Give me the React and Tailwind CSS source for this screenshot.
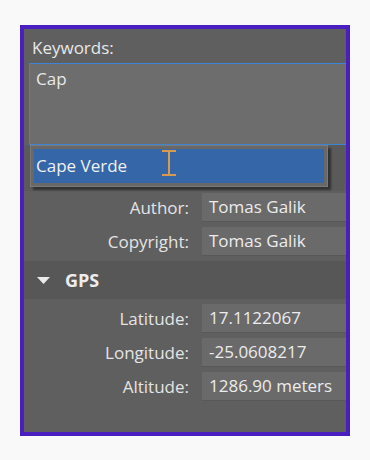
const FieldRow = ({ label, value }) => (
  <div className="flex items-center h-[29px] mb-[5px]">
    <div className="w-[165px] text-right text-[#e4e4e4]">{label}</div>
    <div className="ml-[13px] flex-1 h-full flex items-center pl-[7px] bg-[#6a6a6a] border-b border-[#585858] text-[#ececec]">
      {value}
    </div>
  </div>
);

const App = () => {
  return (
    <div className="min-h-screen bg-[#f9f9f9] pt-[25px] pl-[20px]">
      <div className="relative w-[330px] h-[411px] border-4 border-[#4a1fc0] bg-[#5f5f5f] overflow-hidden font-['Open_Sans',sans-serif] text-[17px] leading-[22px] text-[#e8e8e8]">
        <div className="pl-[8px] pt-[8px]">Keywords:</div>
        <div className="ml-[5px] -mr-[2px] mt-[4px] h-[82px] border border-[#3e84d4] bg-[#6d6d6d] px-[6px] pt-[4px]">
          Cap
        </div>
        <div className="h-[46px] bg-[#5a5a5a]"></div>
        <div className="mt-[2px]">
          <FieldRow label="Author:" value="Tomas Galik" />
          <FieldRow label="Copyright:" value="Tomas Galik" />
        </div>
        <div className="mt-[1px] h-[38px] bg-[#575757] flex items-center">
          <svg width="13" height="7" viewBox="0 0 13 7" className="ml-[13px]">
            <polygon points="0,0 13,0 6.5,7" fill="#ececec" />
          </svg>
          <span className="ml-[15px] font-bold text-[18px] text-[#ededed]">GPS</span>
        </div>
        <div className="mt-[5px]">
          <FieldRow label="Latitude:" value="17.1122067" />
          <FieldRow label="Longitude:" value="-25.0608217" />
          <FieldRow label="Altitude:" value="1286.90 meters" />
        </div>

        <div className="absolute left-[6px] top-[116px] w-[298px] h-[42px] border border-[#7a7a7a] bg-[#686868] p-[3px] shadow-[3px_3px_2px_rgba(0,0,0,0.45)]">
          <div className="h-full bg-[#3566a8] flex items-center pl-[2px] text-[#f0f0f0]">
            Cape Verde
          </div>
        </div>
        <svg
          width="14"
          height="26"
          viewBox="0 0 14 26"
          className="absolute left-[138px] top-[121px]"
        >
          <path d="M0 1 H14 M0 25 H14 M7 1 V25" stroke="#d99a50" strokeWidth="2" fill="none" />
        </svg>
      </div>
    </div>
  );
};

export default App;
